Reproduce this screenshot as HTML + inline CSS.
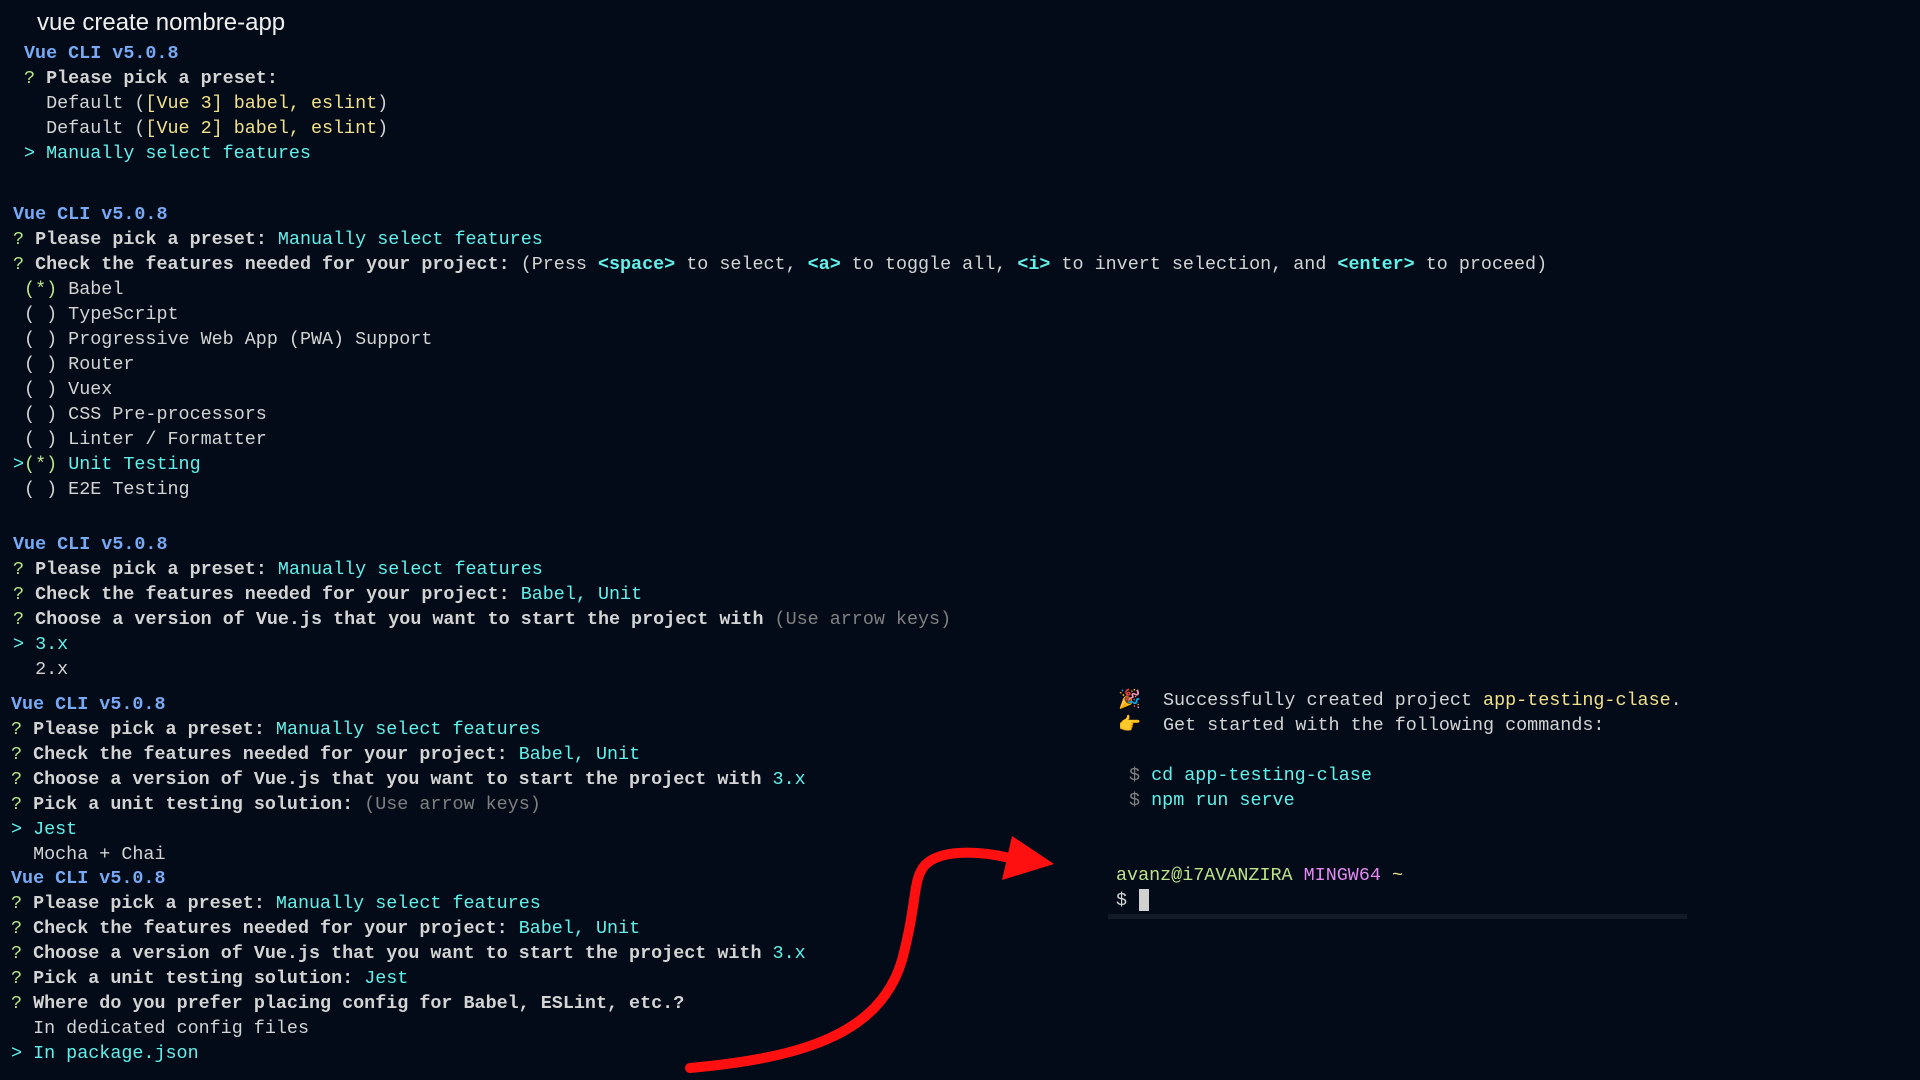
<!DOCTYPE html>
<html><head><meta charset="utf-8"><style>
html,body{margin:0;padding:0;width:1920px;height:1080px;background:#020b17;overflow:hidden}
.l{position:absolute;white-space:pre;font-family:"Liberation Mono",monospace;font-size:18.4px;line-height:25px;color:#d4d4d4;height:25px;margin-top:2px}
.b{color:#78a9f5;font-weight:bold}
.c{color:#62f0ea}
.y{color:#f3e08c}
.g{color:#808080}
.q{color:#b8e88a}
.w{font-weight:bold}
.m{color:#e38af0}
.lg{color:#bfe38a}
</style></head><body>
<div style="position:absolute;left:37px;top:9px;font-family:'Liberation Sans',sans-serif;font-size:24px;color:#f0f0f0">vue create nombre-app</div>

<div class="l" style="left:24px;top:39px"><span class="b">Vue CLI v5.0.8</span></div>
<div class="l" style="left:24px;top:64px"><span class="q">?</span> <span class="w">Please pick a preset:</span></div>
<div class="l" style="left:24px;top:89px">  Default (<span class="y">[Vue 3] babel, eslint</span>)</div>
<div class="l" style="left:24px;top:114px">  Default (<span class="y">[Vue 2] babel, eslint</span>)</div>
<div class="l c" style="left:24px;top:139px">&gt; Manually select features</div>

<div class="l" style="left:13px;top:200px"><span class="b">Vue CLI v5.0.8</span></div>
<div class="l" style="left:13px;top:225px"><span class="q">?</span> <span class="w">Please pick a preset:</span> <span class="c">Manually select features</span></div>
<div class="l" style="left:13px;top:250px"><span class="q">?</span> <span class="w">Check the features needed for your project:</span> (Press <span class="c w">&lt;space&gt;</span> to select, <span class="c w">&lt;a&gt;</span> to toggle all, <span class="c w">&lt;i&gt;</span> to invert selection, and <span class="c w">&lt;enter&gt;</span> to proceed)</div>
<div class="l" style="left:13px;top:275px"> <span class="q">(*)</span> Babel</div>
<div class="l" style="left:13px;top:300px"> ( ) TypeScript</div>
<div class="l" style="left:13px;top:325px"> ( ) Progressive Web App (PWA) Support</div>
<div class="l" style="left:13px;top:350px"> ( ) Router</div>
<div class="l" style="left:13px;top:375px"> ( ) Vuex</div>
<div class="l" style="left:13px;top:400px"> ( ) CSS Pre-processors</div>
<div class="l" style="left:13px;top:425px"> ( ) Linter / Formatter</div>
<div class="l c" style="left:13px;top:450px">&gt;<span class="q">(*)</span> Unit Testing</div>
<div class="l" style="left:13px;top:475px"> ( ) E2E Testing</div>

<div class="l" style="left:13px;top:530px"><span class="b">Vue CLI v5.0.8</span></div>
<div class="l" style="left:13px;top:555px"><span class="q">?</span> <span class="w">Please pick a preset:</span> <span class="c">Manually select features</span></div>
<div class="l" style="left:13px;top:580px"><span class="q">?</span> <span class="w">Check the features needed for your project:</span> <span class="c">Babel, Unit</span></div>
<div class="l" style="left:13px;top:605px"><span class="q">?</span> <span class="w">Choose a version of Vue.js that you want to start the project with</span> <span class="g">(Use arrow keys)</span></div>
<div class="l c" style="left:13px;top:630px">&gt; 3.x</div>
<div class="l" style="left:13px;top:655px">  2.x</div>

<div class="l" style="left:11px;top:690px"><span class="b">Vue CLI v5.0.8</span></div>
<div class="l" style="left:11px;top:715px"><span class="q">?</span> <span class="w">Please pick a preset:</span> <span class="c">Manually select features</span></div>
<div class="l" style="left:11px;top:740px"><span class="q">?</span> <span class="w">Check the features needed for your project:</span> <span class="c">Babel, Unit</span></div>
<div class="l" style="left:11px;top:765px"><span class="q">?</span> <span class="w">Choose a version of Vue.js that you want to start the project with</span> <span class="c">3.x</span></div>
<div class="l" style="left:11px;top:790px"><span class="q">?</span> <span class="w">Pick a unit testing solution:</span> <span class="g">(Use arrow keys)</span></div>
<div class="l c" style="left:11px;top:815px">&gt; Jest</div>
<div class="l" style="left:11px;top:840px">  Mocha + Chai</div>

<div class="l" style="left:11px;top:864px"><span class="b">Vue CLI v5.0.8</span></div>
<div class="l" style="left:11px;top:889px"><span class="q">?</span> <span class="w">Please pick a preset:</span> <span class="c">Manually select features</span></div>
<div class="l" style="left:11px;top:914px"><span class="q">?</span> <span class="w">Check the features needed for your project:</span> <span class="c">Babel, Unit</span></div>
<div class="l" style="left:11px;top:939px"><span class="q">?</span> <span class="w">Choose a version of Vue.js that you want to start the project with</span> <span class="c">3.x</span></div>
<div class="l" style="left:11px;top:964px"><span class="q">?</span> <span class="w">Pick a unit testing solution:</span> <span class="c">Jest</span></div>
<div class="l" style="left:11px;top:989px"><span class="q">?</span> <span class="w">Where do you prefer placing config for Babel, ESLint, etc.?</span></div>
<div class="l" style="left:11px;top:1014px">  In dedicated config files</div>
<div class="l c" style="left:11px;top:1039px">&gt; In package.json</div>

<div class="l" style="left:1118px;top:686px"><span style="color:#e07090">🎉</span>  Successfully created project <span class="y">app-testing-clase</span>.</div>
<div class="l" style="left:1118px;top:711px"><span style="color:#f2b33a">👉</span>  Get started with the following commands:</div>
<div class="l" style="left:1118px;top:761px"> <span class="g">$</span> <span class="c">cd app-testing-clase</span></div>
<div class="l" style="left:1118px;top:786px"> <span class="g">$</span> <span class="c">npm run serve</span></div>
<div class="l" style="left:1116px;top:861px"><span class="lg">avanz@i7AVANZIRA</span> <span class="m">MINGW64</span> <span class="y">~</span></div>
<div class="l" style="left:1116px;top:886px">$ </div>
<div style="position:absolute;left:1139px;top:889px;width:10px;height:22px;background:#d0d0d0"></div>
<div style="position:absolute;left:1108px;top:914px;width:579px;height:5px;background:#121a28"></div>

<svg width="1920" height="1080" style="position:absolute;left:0;top:0">
<path d="M690,1068 C800,1058 880,1035 902,960 C918,900 912,880 925,865 C940,850 975,850 1010,858" fill="none" stroke="#ff1010" stroke-width="10" stroke-linecap="round"/>
<polygon points="1012,836 1054,864 1002,880" fill="#ff1010"/>
</svg>
</body></html>
